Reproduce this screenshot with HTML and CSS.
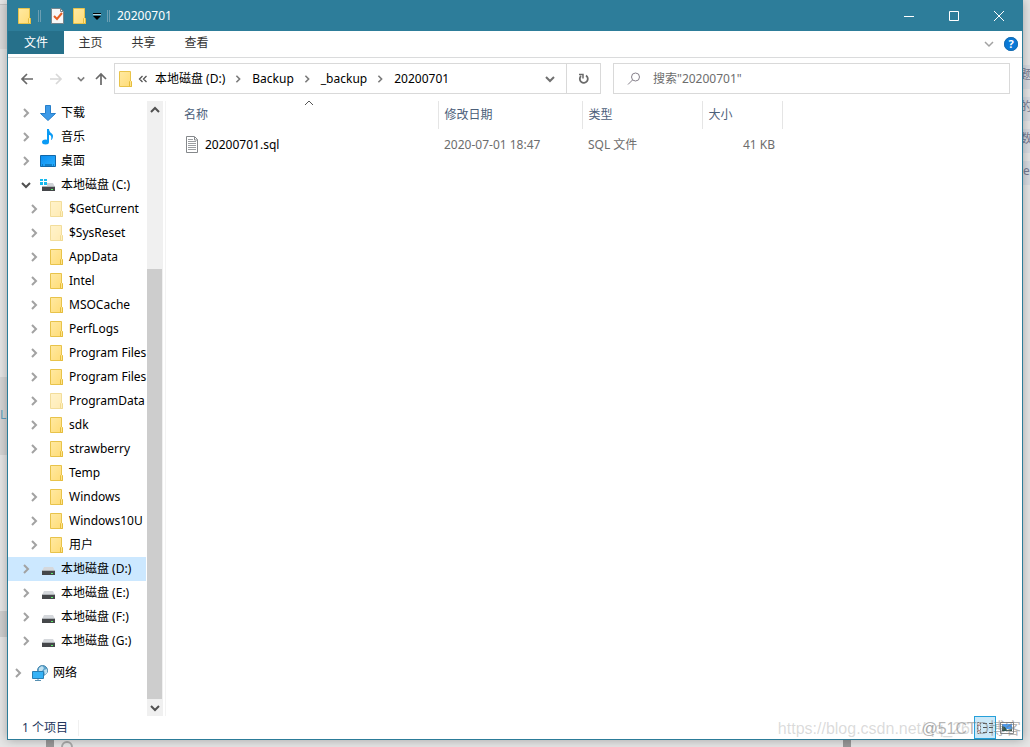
FILE: index.html
```html
<!DOCTYPE html>
<html lang="zh-CN">
<head>
<meta charset="utf-8">
<meta name="viewport" content="width=device-width, initial-scale=1">
<title>20200701</title>
<link rel="stylesheet" href="styles.css">
</head>
<body>
<svg class="defs" aria-hidden="true">
  <defs>
    <linearGradient id="gold" x1="0" y1="0" x2="1" y2="1"><stop offset="0" stop-color="#ffe9a2"/><stop offset="1" stop-color="#ffdc76"/></linearGradient>
    <linearGradient id="sky" x1="0" y1="0" x2="1" y2="1"><stop offset="0" stop-color="#0a8df0"/><stop offset="1" stop-color="#2ab0ff"/></linearGradient>
    <symbol id="folder" viewBox="0 0 16 16"><path d="M2.500.5h11v10l1 1v4h-12z" fill="url(#gold)" stroke="#e8c34a"/><path d="M12.500 15.500v-5l1-1 1 1v5z" fill="#ffe48c" stroke="#e5bd3d"/></symbol>
    <symbol id="right" viewBox="0 0 10 10"><path d="M3 1l4 4-4 4" fill="none" stroke="currentColor" stroke-width="2"/></symbol>
    <symbol id="down" viewBox="0 0 10 10"><path d="M1 3l4 4 4-4" fill="none" stroke="currentColor" stroke-width="2"/></symbol>
    <symbol id="up" viewBox="0 0 10 10"><path d="M1 7l4-4 4 4" fill="none" stroke="currentColor" stroke-width="2"/></symbol>
    <symbol id="disk" viewBox="0 0 16 16"><path d="M4 6h9l2 4H2z" fill="#d5d8dc"/><path d="M2 10h13v4H2z" fill="#45474a"/><path d="M2 9h13v1H2z" fill="#aeb2b6"/><path d="M11 12h2v1h-2z" fill="#5bed68"/></symbol>
    <symbol id="sysdisk" viewBox="0 0 16 16"><path d="M0 2h3v2H0zM4 2h3v2H4zM0 5h3v3H0zM4 5h3v3H4z" fill="#16b9ee"/><path d="M7 6h6l2 4H2l1-1h4z" fill="#d0d3d7"/><path d="M2 10h13v4H2z" fill="#45474a"/><path d="M2 9h13v1H2z" fill="#aeb2b6"/><path d="M11 12h2v1h-2z" fill="#5bed68"/></symbol>
    <symbol id="download" viewBox="0 0 16 16"><path d="M5.500.5h5v8h5L8 15.500.5 8.500h5z" fill="#3d9ae8" stroke="#277fca"/></symbol>
    <symbol id="music" viewBox="0 0 16 16"><ellipse cx="5.500" cy="13" rx="3.500" ry="2.500" fill="#0a9bf5"/><path d="M7 0h2c0 4 4 4 4 7 0 2-1 4-2 4 1-4-.5-5-2-5v7H7z" fill="#0a9bf5"/></symbol>
    <symbol id="desktop" viewBox="0 0 16 16"><path d="M.5 2.500h15v11H.5z" fill="url(#sky)" stroke="#1167a8"/><path d="M2 12h1m2 0h7m1 0h1" stroke="#07578f"/></symbol>
    <symbol id="network" viewBox="0 0 16 16"><circle cx="10.500" cy="5.500" r="5" fill="#5fa6cf" stroke="#4686ad"/><path d="M7 3l3-2 2 2-2 3-3 1zM12 5l3-1v4l-2 2z" fill="#c1e1f0"/><path d="M.5 6.500h11v7H.5z" fill="#35b2f6" stroke="#287eb3"/><path d="M6 14v1M3 15.500h6" stroke="#5790b2"/></symbol>
    <symbol id="textfile" viewBox="0 0 16 18"><path d="M2.500.5h8l3 3v13h-11z" fill="#fff" stroke="#85888b"/><path d="M10.500 1v3h3" fill="none" stroke="#85888b"/><path d="M4 3.500h5M4 5.500h8M4 7.500h8M4 9.500h8M4 11.500h8M4 13.500h8" stroke="#9b9ea1"/></symbol>
  </defs>
</svg>

<div class="desktop">
  <div class="backdrop" aria-hidden="true">
    <span class="strip strip-top"></span><span class="strip strip-mid">L</span><span class="strip strip-low"></span>
    <span class="bit bit-1">题</span><span class="bit bit-2">的</span><span class="bit bit-3">数</span><span class="bit bit-4">e</span>
    <span class="peg peg-a"></span><span class="ring"></span><span class="peg peg-b"></span>
  </div>

  <main class="window">
    <header class="titlebar">
      <svg class="icon"><use href="#folder"/></svg>
      <span class="bar"></span>
      <button class="quick" aria-label="属性"><svg class="icon" viewBox="0 0 16 16"><path d="M2.500.5h9l3 3v12h-12z" fill="#f8f8f8" stroke="#77858c"/><path d="M11.500.5v3h3" fill="none" stroke="#77858c"/><path d="M5 8l3 3 5-6" fill="none" stroke="#e65f24" stroke-width="2"/></svg></button>
      <button class="quick" aria-label="新建文件夹"><svg class="icon"><use href="#folder"/></svg></button>
      <button class="quick menu" aria-label="自定义快速访问工具栏"><svg class="arrow" viewBox="0 0 8 8"><path d="M0 1.500h8" stroke="#000"/><path d="M0 2.500h8" stroke="#b9d4de"/><path d="M0 4h8L4 8z" fill="#000"/></svg></button>
      <span class="bar"></span>
      <h1 class="title">20200701</h1>
      <div class="controls">
        <button class="control" aria-label="最小化"><svg viewBox="0 0 12 12"><path d="M1 6.500h10"/></svg></button>
        <button class="control" aria-label="最大化"><svg viewBox="0 0 12 12"><path d="M1.500 1.500h9v9h-9z"/></svg></button>
        <button class="control" aria-label="关闭"><svg viewBox="0 0 12 12"><path d="M1 1l10 10M11 1L1 11"/></svg></button>
      </div>
    </header>

    <nav class="ribbon">
      <button class="tab tab-file">文件</button>
      <button class="tab">主页</button>
      <button class="tab">共享</button>
      <button class="tab">查看</button>
      <div class="ribbon-end">
        <button class="plain" aria-label="展开功能区"><svg class="chev" viewBox="0 0 10 10"><path d="M1 3l4 4 4-4" fill="none" stroke="currentColor" stroke-width="1.500"/></svg></button>
        <button class="help" aria-label="帮助">?</button>
      </div>
    </nav>

    <div class="toolbar">
      <div class="history">
        <button class="plain" aria-label="后退"><svg class="nav" viewBox="0 0 14 14"><path d="M13 7H2M7 2L2 7l5 5"/></svg></button>
        <button class="plain" aria-label="前进" disabled><svg class="nav off" viewBox="0 0 14 14"><path d="M1 7h11M7 2l5 5-5 5"/></svg></button>
        <button class="plain recent" aria-label="最近浏览的位置"><svg class="chev tiny"><use href="#down"/></svg></button>
        <button class="plain" aria-label="上移"><svg class="nav" viewBox="0 0 14 14"><path d="M7 13V2M2 7l5-5 5 5"/></svg></button>
      </div>
      <div class="address">
        <svg class="icon"><use href="#folder"/></svg>
        <svg class="chev back" viewBox="0 0 10 10"><path d="M4.500 2l-3 3 3 3M8.500 2l-3 3 3 3" fill="none" stroke="currentColor" stroke-width="1.300"/></svg>
        <nav class="crumbs">
          <a href="#d">本地磁盘 (D:)</a><svg class="chev small"><use href="#right"/></svg>
          <a href="#b">Backup</a><svg class="chev small"><use href="#right"/></svg>
          <a href="#bb">_backup</a><svg class="chev small"><use href="#right"/></svg>
          <a href="#c">20200701</a>
        </nav>
        <button class="plain open" aria-label="以前的位置"><svg class="chev"><use href="#down"/></svg></button>
        <button class="plain refresh" aria-label="刷新"><svg viewBox="0 0 12 12"><path d="M3 3a4 4 0 1 0 5-.5" fill="none" stroke="#6a6a6a" stroke-width="1.800"/><path d="M1 1.500h4v4" fill="none" stroke="#6a6a6a" stroke-width="1.500"/></svg></button>
      </div>
      <label class="search">
        <svg viewBox="0 0 14 14"><circle cx="8.500" cy="5" r="4" fill="none" stroke="#85808a"/><path d="M5.500 8L1 12.500" stroke="#85808a"/></svg>
        <input type="search" aria-label="搜索" placeholder='搜索"20200701"'>
      </label>
    </div>

    <div class="content">
      <ul class="tree">
        <li><button class="node"><svg class="chev"><use href="#right"/></svg><svg class="icon"><use href="#download"/></svg>下载</button></li>
        <li><button class="node"><svg class="chev"><use href="#right"/></svg><svg class="icon"><use href="#music"/></svg>音乐</button></li>
        <li><button class="node"><svg class="chev"><use href="#right"/></svg><svg class="icon"><use href="#desktop"/></svg>桌面</button></li>
        <li><button class="node"><svg class="chev dark"><use href="#down"/></svg><svg class="icon"><use href="#sysdisk"/></svg>本地磁盘 (C:)</button>
          <ul class="branch">
            <li><button class="node"><svg class="chev"><use href="#right"/></svg><svg class="icon hidden-item"><use href="#folder"/></svg>$GetCurrent</button></li>
            <li><button class="node"><svg class="chev"><use href="#right"/></svg><svg class="icon hidden-item"><use href="#folder"/></svg>$SysReset</button></li>
            <li><button class="node"><svg class="chev"><use href="#right"/></svg><svg class="icon"><use href="#folder"/></svg>AppData</button></li>
            <li><button class="node"><svg class="chev"><use href="#right"/></svg><svg class="icon"><use href="#folder"/></svg>Intel</button></li>
            <li><button class="node"><svg class="chev"><use href="#right"/></svg><svg class="icon"><use href="#folder"/></svg>MSOCache</button></li>
            <li><button class="node"><svg class="chev"><use href="#right"/></svg><svg class="icon"><use href="#folder"/></svg>PerfLogs</button></li>
            <li><button class="node"><svg class="chev"><use href="#right"/></svg><svg class="icon"><use href="#folder"/></svg>Program Files</button></li>
            <li><button class="node"><svg class="chev"><use href="#right"/></svg><svg class="icon"><use href="#folder"/></svg>Program Files</button></li>
            <li><button class="node"><svg class="chev"><use href="#right"/></svg><svg class="icon hidden-item"><use href="#folder"/></svg>ProgramData</button></li>
            <li><button class="node"><svg class="chev"><use href="#right"/></svg><svg class="icon"><use href="#folder"/></svg>sdk</button></li>
            <li><button class="node"><svg class="chev"><use href="#right"/></svg><svg class="icon"><use href="#folder"/></svg>strawberry</button></li>
            <li><button class="node"><svg class="chev"></svg><svg class="icon"><use href="#folder"/></svg>Temp</button></li>
            <li><button class="node"><svg class="chev"><use href="#right"/></svg><svg class="icon"><use href="#folder"/></svg>Windows</button></li>
            <li><button class="node"><svg class="chev"><use href="#right"/></svg><svg class="icon"><use href="#folder"/></svg>Windows10U</button></li>
            <li><button class="node"><svg class="chev"><use href="#right"/></svg><svg class="icon"><use href="#folder"/></svg>用户</button></li>
          </ul>
        </li>
        <li><button class="node selected"><svg class="chev"><use href="#right"/></svg><svg class="icon"><use href="#disk"/></svg>本地磁盘 (D:)</button></li>
        <li><button class="node"><svg class="chev"><use href="#right"/></svg><svg class="icon"><use href="#disk"/></svg>本地磁盘 (E:)</button></li>
        <li><button class="node"><svg class="chev"><use href="#right"/></svg><svg class="icon"><use href="#disk"/></svg>本地磁盘 (F:)</button></li>
        <li><button class="node"><svg class="chev"><use href="#right"/></svg><svg class="icon"><use href="#disk"/></svg>本地磁盘 (G:)</button></li>
        <li class="root"><button class="node"><svg class="chev"><use href="#right"/></svg><svg class="icon"><use href="#network"/></svg>网络</button></li>
      </ul>
      <div class="scroll">
        <button class="scroll-end" aria-label="向上滚动"><svg class="chev dark"><use href="#up"/></svg></button>
        <div class="track"><div class="thumb"></div></div>
        <button class="scroll-end" aria-label="向下滚动"><svg class="chev dark"><use href="#down"/></svg></button>
      </div>
      <section class="files">
        <table>
          <colgroup><col class="c-name"><col class="c-date"><col class="c-type"><col class="c-size"></colgroup>
          <thead><tr><th class="sorted">名称<svg class="chev" viewBox="0 0 10 10"><path d="M1 7l4-4 4 4" fill="none" stroke="currentColor"/></svg></th><th>修改日期</th><th>类型</th><th>大小</th></tr></thead>
          <tbody><tr><td><span class="file"><svg><use href="#textfile"/></svg>20200701.sql</span></td><td>2020-07-01 18:47</td><td>SQL 文件</td><td class="size">41 KB</td></tr></tbody>
        </table>
      </section>
    </div>

    <footer class="status">
      <span class="count">1 个项目</span>
      <div class="views">
        <button class="view active" aria-label="详细信息"><svg viewBox="0 0 16 14"><path d="M.5 1.500h3v11h-3z" fill="#fff" stroke="#777" stroke-dasharray="2 1"/><path d="M2 4v1M2 9v1" stroke="#d33" stroke-width="1"/><path d="M6 2.500h4m2 0h4M6 6.500h4m2 0h4M6 11.500h4m2 0h4" stroke="#555"/></svg></button>
        <button class="view" aria-label="大图标"><svg viewBox="0 0 16 14"><path d="M1.500 1.500h13v11h-13z" fill="#fff" stroke="#888"/><path d="M3 3h10v5H3z" fill="#4d9cf0"/><path d="M3 10V5l3 1 2 3 5-1v2z" fill="#31564e"/></svg></button>
      </div>
    </footer>
  </main>

  <span class="mark mark-url">https://blog.csdn.net/qq_26</span>
  <span class="mark mark-site">@51CTO博客</span>
</div>
</body>
</html>
```
FILE: styles.css
```css
* { box-sizing: border-box; }

body {
  margin: 0;
  font: 12px/16px "Noto Sans", "Noto Sans CJK SC", sans-serif;
  color: #000;
  background: #e6e6e6;
}

button, input { font: inherit; color: inherit; }
button { padding: 0; border: 0; background: none; display: flex; align-items: center; justify-content: center; }
svg { display: block; flex: none; }
ul { list-style: none; margin: 0; padding: 0; }
a { color: inherit; text-decoration: none; }

.defs { position: absolute; width: 0; height: 0; }
.icon { width: 16px; height: 16px; }
.chev { width: 10px; height: 10px; color: #a2a2a2; }
.dark { color: #505050; }
.hidden-item { opacity: 0.55; }

.desktop {
  position: relative;
  display: flex;
  min-height: 100vh;
  padding: 0 7px 7px;
  overflow: hidden;
}

/* Page behind the window */
.backdrop { position: absolute; inset: 0; }
.backdrop span { position: absolute; }
.strip { left: 0; width: 7px; overflow: hidden; color: #5a9fc0; }
.strip-top { top: 4px; height: 45px; background: #dadada; border-top: 1px solid #c4c4c4; }
.strip-mid { top: 377px; height: 78px; background: #d6d6d6; line-height: 76px; }
.strip-low { top: 611px; height: 26px; background: #cfcfcf; }
.bit { right: 0; width: 7px; height: 24px; overflow: hidden; font-size: 12px; line-height: 20px; text-indent: -3px; color: #777b93; background: #d9dce2; }
.bit-1 { top: 65px; }
.bit-2 { top: 97px; }
.bit-3 { top: 129px; }
.bit-4 { top: 161px; text-indent: 0; }
.peg { bottom: 0; width: 8px; height: 7px; background: #999; }
.peg-a { left: 46px; }
.peg-b { left: 843px; }
.ring { left: 61px; bottom: -6px; width: 12px; height: 12px; border: 2px solid #aaa; border-radius: 50%; }

.window {
  position: relative;
  flex: 1;
  min-width: 0;
  display: flex;
  flex-direction: column;
  background: #fff;
  border: 1px solid #2c7c99;
  border-top: 0;
  box-shadow: 0 0 10px rgba(0, 0, 0, 0.3);
}

.titlebar { display: flex; align-items: center; height: 31px; padding: 0 1px 0 8px; background: #2d7d9a; color: #fff; }
.bar { width: 3px; height: 12px; margin: 0 5px 0 6px; border: solid #6c9fb3; border-width: 0 1px; }
.quick { width: 22px; }
.menu { width: 14px; }
.arrow { width: 8px; height: 8px; }
.title { margin: 0; font-size: 12px; font-weight: 400; }
.menu + .bar { margin: 0 7px 0 3px; }
.controls { display: flex; margin-left: auto; align-self: stretch; }
.control { width: 45px; }
.control svg { width: 12px; height: 12px; fill: none; stroke: #fff; }

.ribbon { display: flex; height: 27px; border-bottom: 1px solid #dadbdc; }
.tab { width: 53px; height: 23px; line-height: 22px; color: #333; }
.tab-file { width: 56px; background: #26708a; color: #fff; }
.ribbon-end { display: flex; align-items: center; gap: 10px; margin-left: auto; padding-right: 4px; }
.help { width: 14px; height: 14px; border-radius: 50%; background: #0878d7; color: #fff; font-weight: 700; font-size: 11px; line-height: 14px; outline: 1px solid #1b6cab; outline-offset: -1px; }

.toolbar { display: flex; align-items: center; gap: 12px; height: 43px; padding: 0 12px 2px 12px; }
.history { display: flex; align-items: center; gap: 15px; margin-right: -6px; }
.nav { width: 14px; height: 14px; fill: none; stroke: #696969; stroke-width: 1.7; }
.off { stroke: #d8d8d8; }
.tiny { width: 8px; height: 8px; color: #808080; }
.recent { margin: 0 -6px 0 -1px; }
.address { flex: 487 1 487px; display: flex; align-items: center; min-width: 0; height: 31px; border: 1px solid #d9d9d9; padding-left: 2px; }
.back { margin: 0 7px 0 5px; color: #555; }
.crumbs { display: flex; align-items: center; white-space: nowrap; }
.small { width: 8px; height: 8px; margin: 0 10px 0 9px; color: #7a7a7a; }
.open { width: 32px; margin-left: auto; }
.open .chev { color: #707070; }
.refresh { width: 34px; align-self: stretch; border-left: 1px solid #d9d9d9; }
.refresh svg { width: 12px; height: 12px; }
.search { flex: 397 1 397px; display: flex; align-items: center; gap: 12px; min-width: 0; height: 31px; padding-left: 13px; border: 1px solid #d9d9d9; }
.search svg { width: 14px; height: 14px; }
.search input { flex: 1; min-width: 0; border: 0; padding: 0; outline: 0; background: none; }
.search input::placeholder { color: #6d6d6d; opacity: 1; }

.content { flex: 1; display: flex; min-height: 0; }
.tree { width: 139px; overflow: hidden; }
.node { width: 138px; height: 24px; padding-left: 13px; justify-content: flex-start; white-space: nowrap; }
.node .chev { margin-right: 9px; }
.node .icon { margin-right: 5px; }
.branch .node { padding-left: 21px; }
.root { margin-top: 8px; }
.root .node { padding-left: 5px; }
.selected { background: #cce8ff; }
.scroll { display: flex; flex-direction: column; width: 16px; background: #f0f0f0; }
.scroll-end { height: 17px; }
.track { flex: 1; display: flex; flex-direction: column; justify-content: flex-end; }
.thumb { width: 15px; height: 74%; background: #cdcdcd; }

.files { flex: 1; min-width: 0; margin-left: 2px; border-left: 1px solid #f3f3f3; padding-left: 8px; }
table { border-collapse: collapse; table-layout: fixed; width: 608px; }
.c-name { width: 264px; }
.c-date { width: 144px; }
.c-type { width: 120px; }
.c-size { width: 80px; }
th { position: relative; height: 28px; padding: 0 0 0 6px; text-align: left; font-weight: 400; color: #4c607a; border-right: 1px solid #e5e5e5; }
td { height: 32px; padding: 0 7px 0 6px; color: #6d6d6d; white-space: nowrap; }
th:first-child, td:first-child { padding-left: 10px; }
.sorted .chev { position: absolute; left: 50%; top: -3px; margin-left: -2px; color: #555; }
.file { display: flex; align-items: center; gap: 5px; color: #000; }
.file svg { width: 16px; height: 18px; }
.size { text-align: right; }

.status { display: flex; align-items: center; justify-content: space-between; height: 23px; padding: 0 4px 0 14px; color: #23365c; }
.count { padding-right: 10px; border-right: 1px solid #f0f0f0; }
.views { display: flex; align-self: stretch; }
.view { width: 22px; border: 1px solid transparent; }
.view svg { width: 16px; height: 14px; }
.active { background: #cce8f7; border-color: #26a0da; }

/* Watermarks lie over the window */
.mark { position: absolute; font: 16px/20px "Liberation Sans", "Noto Sans CJK SC", sans-serif; white-space: nowrap; pointer-events: none; }
.mark-url { right: 60px; bottom: 8px; color: rgba(150, 150, 150, 0.35); }
.mark-site { right: 9px; bottom: 8px; color: rgba(120, 120, 120, 0.55); }
```
